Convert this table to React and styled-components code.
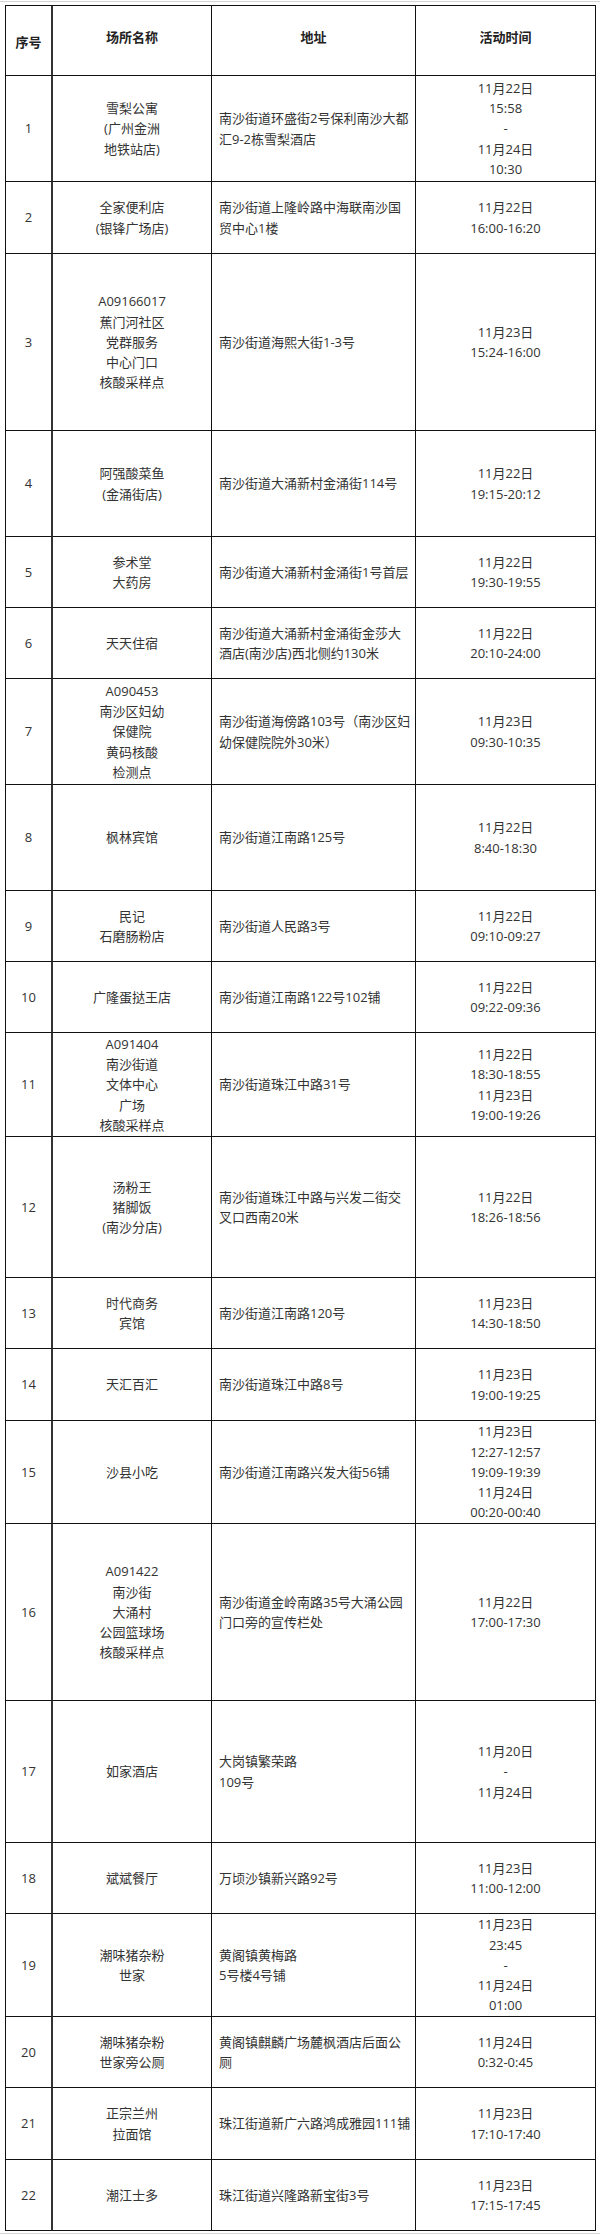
import React from 'react';
import styled, { createGlobalStyle } from 'styled-components';

const GlobalStyle = createGlobalStyle`
  html, body {
    margin: 0;
    padding: 0;
    background: #fff;
  }
  body {
    font-family: "Open Sans", "Noto Sans CJK SC", sans-serif;
    color: #333;
  }
`;

// styled-components
const Frame = styled.div`
  width: 600px;
  margin-top: 1px;
  padding: 3px 4px 2px 5px;
  box-sizing: border-box;
  border-top: 1px solid #d4d4d4;
  border-bottom: 1px solid #d4d4d4;
`;

const Table = styled.table`
  width: 100%;
  table-layout: fixed;
  border-collapse: separate;
  border-spacing: 0;
  border-top: 1px solid #111;
  border-left: 1px solid #111;
  font-size: 13px;
  line-height: 20.25px;
`;

const Row = styled.tr`
  height: ${p => p.$h}px;
`;

const HeadCell = styled.th`
  font-weight: 700;
  color: #222;
  text-align: center;
  vertical-align: middle;
  padding: ${p => (p.$first ? '3px 0 0' : '0 0 7px')};
  border-right: ${p => (p.$first ? '2px solid #333' : '1px solid #111')};
  border-bottom: 1px solid #111;
`;

const Cell = styled.td`
  text-align: ${p => (p.$left ? 'left' : 'center')};
  vertical-align: middle;
  padding: ${p => (p.$left ? '0 2px 0 7px' : '0')};
  white-space: nowrap;
  overflow: hidden;
  border-right: ${p => (p.$first ? '2px solid #333' : '1px solid #111')};
  border-bottom: 1px solid #111;
`;

const Line = styled.div`
  display: block;
`;
// end styled-components

const rows = [
  { h: 106, name: ['雪梨公寓', '(广州金洲', '地铁站店)'], addr: ['南沙街道环盛街2号保利南沙大都', '汇9-2栋雪梨酒店'], time: ['11月22日', '15:58', '-', '11月24日', '10:30'] },
  { h: 72, name: ['全家便利店', '(银锋广场店)'], addr: ['南沙街道上隆岭路中海联南沙国', '贸中心1楼'], time: ['11月22日', '16:00-16:20'] },
  { h: 177, name: ['A09166017', '蕉门河社区', '党群服务', '中心门口', '核酸采样点'], addr: ['南沙街道海熙大街1-3号'], time: ['11月23日', '15:24-16:00'] },
  { h: 106, name: ['阿强酸菜鱼', '(金涌街店)'], addr: ['南沙街道大涌新村金涌街114号'], time: ['11月22日', '19:15-20:12'] },
  { h: 71, name: ['参术堂', '大药房'], addr: ['南沙街道大涌新村金涌街1号首层'], time: ['11月22日', '19:30-19:55'] },
  { h: 71, name: ['天天住宿'], addr: ['南沙街道大涌新村金涌街金莎大', '酒店(南沙店)西北侧约130米'], time: ['11月22日', '20:10-24:00'] },
  { h: 106, name: ['A090453', '南沙区妇幼', '保健院', '黄码核酸', '检测点'], addr: ['南沙街道海傍路103号（南沙区妇', '幼保健院院外30米）'], time: ['11月23日', '09:30-10:35'] },
  { h: 106, name: ['枫林宾馆'], addr: ['南沙街道江南路125号'], time: ['11月22日', '8:40-18:30'] },
  { h: 71, name: ['民记', '石磨肠粉店'], addr: ['南沙街道人民路3号'], time: ['11月22日', '09:10-09:27'] },
  { h: 71, name: ['广隆蛋挞王店'], addr: ['南沙街道江南路122号102铺'], time: ['11月22日', '09:22-09:36'] },
  { h: 104, name: ['A091404', '南沙街道', '文体中心', '广场', '核酸采样点'], addr: ['南沙街道珠江中路31号'], time: ['11月22日', '18:30-18:55', '11月23日', '19:00-19:26'] },
  { h: 141, name: ['汤粉王', '猪脚饭', '(南沙分店)'], addr: ['南沙街道珠江中路与兴发二街交', '叉口西南20米'], time: ['11月22日', '18:26-18:56'] },
  { h: 71, name: ['时代商务', '宾馆'], addr: ['南沙街道江南路120号'], time: ['11月23日', '14:30-18:50'] },
  { h: 72, name: ['天汇百汇'], addr: ['南沙街道珠江中路8号'], time: ['11月23日', '19:00-19:25'] },
  { h: 103, name: ['沙县小吃'], addr: ['南沙街道江南路兴发大街56铺'], time: ['11月23日', '12:27-12:57', '19:09-19:39', '11月24日', '00:20-00:40'] },
  { h: 177, name: ['A091422', '南沙街', '大涌村', '公园篮球场', '核酸采样点'], addr: ['南沙街道金岭南路35号大涌公园', '门口旁的宣传栏处'], time: ['11月22日', '17:00-17:30'] },
  { h: 142, name: ['如家酒店'], addr: ['大岗镇繁荣路', '109号'], time: ['11月20日', '-', '11月24日'] },
  { h: 71, name: ['斌斌餐厅'], addr: ['万顷沙镇新兴路92号'], time: ['11月23日', '11:00-12:00'] },
  { h: 103, name: ['潮味猪杂粉', '世家'], addr: ['黄阁镇黄梅路', '5号楼4号铺'], time: ['11月23日', '23:45', '-', '11月24日', '01:00'] },
  { h: 71, name: ['潮味猪杂粉', '世家旁公厕'], addr: ['黄阁镇麒麟广场麓枫酒店后面公', '厕'], time: ['11月24日', '0:32-0:45'] },
  { h: 72, name: ['正宗兰州', '拉面馆'], addr: ['珠江街道新广六路鸿成雅园111铺'], time: ['11月23日', '17:10-17:40'] },
  { h: 71, name: ['潮江士多'], addr: ['珠江街道兴隆路新宝街3号'], time: ['11月23日', '17:15-17:45'] },
];

const Lines = ({ items }) => items.map((t, i) => <Line key={i}>{t}</Line>);

const App = () => {
  return (
    <>
      <GlobalStyle />
      <Frame>
        <Table>
          <colgroup>
            <col style={{ width: 47 }} />
            <col style={{ width: 159 }} />
            <col style={{ width: 204 }} />
            <col />
          </colgroup>
          <thead>
            <Row $h={70}>
              <HeadCell $first>序号</HeadCell>
              <HeadCell>场所名称</HeadCell>
              <HeadCell>地址</HeadCell>
              <HeadCell>活动时间</HeadCell>
            </Row>
          </thead>
          <tbody>
            {rows.map((r, i) => (
              <Row key={i} $h={r.h}>
                <Cell $first>{i + 1}</Cell>
                <Cell><Lines items={r.name} /></Cell>
                <Cell $left><Lines items={r.addr} /></Cell>
                <Cell><Lines items={r.time} /></Cell>
              </Row>
            ))}
          </tbody>
        </Table>
      </Frame>
    </>
  );
};

export default App;
